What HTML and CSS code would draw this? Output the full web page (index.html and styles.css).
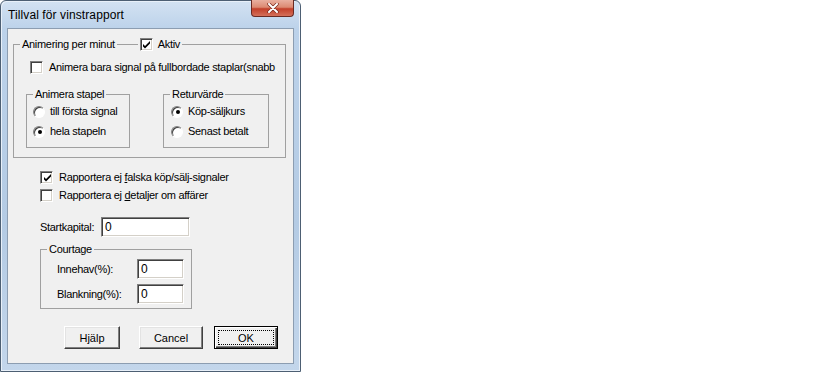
FILE: index.html
```html
<!DOCTYPE html>
<html lang="sv">
<head>
    <meta charset="UTF-8">
    <title>Tillval för vinstrapport</title>
    <link rel="stylesheet" href="styles.css">
</head>
<body>
    <div class="window">
        <div class="titlebar">
            <span class="title">Tillval för vinstrapport</span>
            <span class="close">
                <svg width="12" height="10" viewBox="0 0 12 10">
                    <path d="M2 1 L10 9 M10 1 L2 9" stroke="#7a2a1e" stroke-width="3.4" stroke-linecap="round"/>
                    <path d="M2 1 L10 9 M10 1 L2 9" stroke="#fff" stroke-width="2" stroke-linecap="round"/>
                </svg>
            </span>
        </div>

        <div class="client">
            <fieldset class="group group-anim">
                <legend class="caption caption-row">
                    <span>Animering per minut</span>
                    <span class="rule"></span>
                    <span class="check on"><svg width="7" height="8" viewBox="0 0 7 8"><polygon points="0,3 2,5 7,0 7,2.5 2,7.5 0,5.5" fill="#000"/></svg></span>
                    <span class="aktiv">Aktiv</span>
                </legend>

                <div class="row row-fast"><span class="check"></span><span>Animera bara signal på fullbordade staplar(snabb</span></div>

                <div class="subgroups">
                    <fieldset class="group sub">
                        <legend class="caption">Animera stapel</legend>
                        <div class="options">
                            <div class="row"><span class="radio"></span><span>till första signal</span></div>
                            <div class="row"><span class="radio on"></span><span>hela stapeln</span></div>
                        </div>
                    </fieldset>
                    <fieldset class="group sub sub-right">
                        <legend class="caption">Returvärde</legend>
                        <div class="options">
                            <div class="row"><span class="radio on"></span><span>Köp-säljkurs</span></div>
                            <div class="row"><span class="radio"></span><span>Senast betalt</span></div>
                        </div>
                    </fieldset>
                </div>
            </fieldset>

            <div class="report">
                <div class="row"><span class="check on"><svg width="7" height="8" viewBox="0 0 7 8"><polygon points="0,3 2,5 7,0 7,2.5 2,7.5 0,5.5" fill="#000"/></svg></span><span>Rapportera ej <u>f</u>alska köp/sälj-signaler</span></div>
                <div class="row"><span class="check"></span><span>Rapportera ej <u>d</u>etaljer om affärer</span></div>
            </div>

            <div class="field start">
                <span class="label">Startkapital:</span>
                <span class="input wide">0</span>
            </div>

            <fieldset class="group courtage">
                <legend class="caption">Courtage</legend>
                <div class="fields">
                    <div class="field">
                        <span class="label">Innehav(%):</span>
                        <span class="input">0</span>
                    </div>
                    <div class="field">
                        <span class="label">Blankning(%):</span>
                        <span class="input">0</span>
                    </div>
                </div>
            </fieldset>

            <div class="buttons">
                <span class="btn btn-help">Hjälp</span>
                <span class="btn btn-cancel">Cancel</span>
                <span class="btn btn-ok"><span class="focus">OK</span></span>
            </div>
        </div>
    </div>
</body>
</html>
```

FILE: styles.css
```css
body {
    margin: 0;
    background-color: #fff;
    font-family: "Liberation Sans", Arial, sans-serif;
    font-size: 11px;
    letter-spacing: -0.3px;
    color: #000;
}

.window {
    width: 301px;
    height: 372px;
    box-sizing: border-box;
    padding: 0 6px 7px 6px;
    border: 1px solid #4d5f73;
    border-radius: 6px 6px 0 0;
    background: linear-gradient(180deg, #d3e2f2 0, #bcd2ea 28px, #b4cbe4 60%, #c3d6eb 100%);
    box-shadow: inset 1px 1px 0 #e8f0f9, inset -1px -1px 0 #e8f0f9;
    display: flex;
    flex-direction: column;
}

.titlebar {
    height: 27px;
    display: flex;
    justify-content: space-between;
    align-items: flex-start;
}

.title {
    font-size: 12px;
    margin: 7px 0 0 1px;
    letter-spacing: 0.1px;
}

.close {
    width: 43px;
    height: 17px;
    margin-top: -1px;
    box-sizing: border-box;
    border: 1px solid #6a2a22;
    border-top: none;
    border-radius: 0 0 4px 4px;
    background: linear-gradient(180deg, #e9b0a0 0, #dc8a72 45%, #c3402a 55%, #d4705a 100%);
    display: flex;
    justify-content: center;
    align-items: center;
}

.client {
    flex: 1;
    background-color: #f0f0f0;
    border: 1px solid #8c9db1;
    padding-top: 9px;
    display: flex;
    flex-direction: column;
    align-items: flex-start;
}

/* group boxes */
.group {
    margin: 0;
    padding: 0;
    border: 1px solid #a0a0a0;
    min-width: 0;
    box-sizing: border-box;
}

.caption {
    padding: 0 2px;
    margin-left: 6px;
    line-height: 13px;
    height: 13px;
}

.caption-row {
    display: flex;
    align-items: center;
}

.rule {
    width: 21px;
    height: 1px;
    background-color: #a0a0a0;
    margin: 0 2px 0 2px;
}

.aktiv {
    margin-left: 5px;
}

.group-anim {
    margin-left: 5px;
    width: 273px;
    padding-bottom: 9px;
}

.row {
    display: flex;
    align-items: center;
    height: 13px;
    line-height: 13px;
    white-space: nowrap;
}

.row-fast {
    margin: 10px 0 0 16px;
}

.row-fast .check {
    margin-right: 6px;
}

.subgroups {
    display: flex;
    gap: 33px;
    margin: 14px 0 0 12px;
}

.sub {
    width: 104px;
    padding-bottom: 9px;
}

.sub-right {
    width: 106px;
}

.options {
    padding: 4px 0 0 6px;
    display: flex;
    flex-direction: column;
    gap: 7px;
}

.sub-right .options {
    padding-left: 7px;
}

/* check boxes and radios */
.check {
    width: 13px;
    height: 13px;
    box-sizing: border-box;
    border: 1px solid;
    border-color: #808080 #fff #fff #808080;
    box-shadow: inset 1px 1px 0 #404040, inset -1px -1px 0 #d4d0c8;
    background-color: #fff;
    display: inline-flex;
    justify-content: center;
    align-items: center;
    flex-shrink: 0;
}

.check svg {
    margin: 1px 0 0 1px;
}

.report .check {
    margin-right: 6px;
}

.radio {
    width: 12px;
    height: 12px;
    box-sizing: border-box;
    border-radius: 50%;
    border: 1px solid;
    border-color: #808080 #fff #fff #808080;
    box-shadow: inset 1px 1px 0 #404040;
    background-color: #fff;
    margin-right: 5px;
    display: inline-flex;
    justify-content: center;
    align-items: center;
    flex-shrink: 0;
}

.radio.on::after {
    content: "";
    width: 4px;
    height: 4px;
    border-radius: 50%;
    background-color: #000;
    margin: 1px 0 0 1px;
}

.report {
    margin: 13px 0 0 32px;
    display: flex;
    flex-direction: column;
    gap: 5px;
}

/* edit fields */
.field {
    display: flex;
    align-items: center;
}

.start {
    margin: 15px 0 0 32px;
}

.start .label {
    width: 61px;
}

.input {
    height: 20px;
    width: 47px;
    box-sizing: border-box;
    border: 1px solid;
    border-color: #808080 #fff #fff #808080;
    box-shadow: inset 1px 1px 0 #404040, inset -1px -1px 0 #d4d0c8;
    background-color: #fff;
    padding: 2px 0 0 3px;
    font-size: 12px;
    line-height: 15px;
}

.input.wide {
    width: 89px;
}

.courtage {
    margin: 6px 0 0 32px;
    width: 152px;
    padding-bottom: 4px;
}

.fields {
    padding: 3px 0 0 16px;
    display: flex;
    flex-direction: column;
    gap: 5px;
}

.courtage .label {
    width: 80px;
}

/* buttons */
.buttons {
    display: flex;
    margin: 17px 0 0 56px;
    gap: 19px;
}

.btn {
    height: 23px;
    box-sizing: border-box;
    border: 1px solid;
    border-color: #fff #404040 #404040 #fff;
    box-shadow: inset -1px -1px 0 #808080, inset 1px 1px 0 #e3e3e3;
    background-color: #f0f0f0;
    display: flex;
    justify-content: center;
    align-items: center;
    font-size: 11px;
    letter-spacing: 0;
}

.btn-help {
    width: 56px;
}

.btn-cancel {
    width: 64px;
}

.btn-ok {
    width: 64px;
    margin-left: -8px;
    border: 1px solid #000;
    box-shadow: inset 1px 1px 0 #fff, inset -1px -1px 0 #404040, inset -2px -2px 0 #808080;
}

.focus {
    width: 56px;
    height: 15px;
    box-sizing: border-box;
    border: 1px dotted #000;
    display: flex;
    justify-content: center;
    align-items: center;
}
```
